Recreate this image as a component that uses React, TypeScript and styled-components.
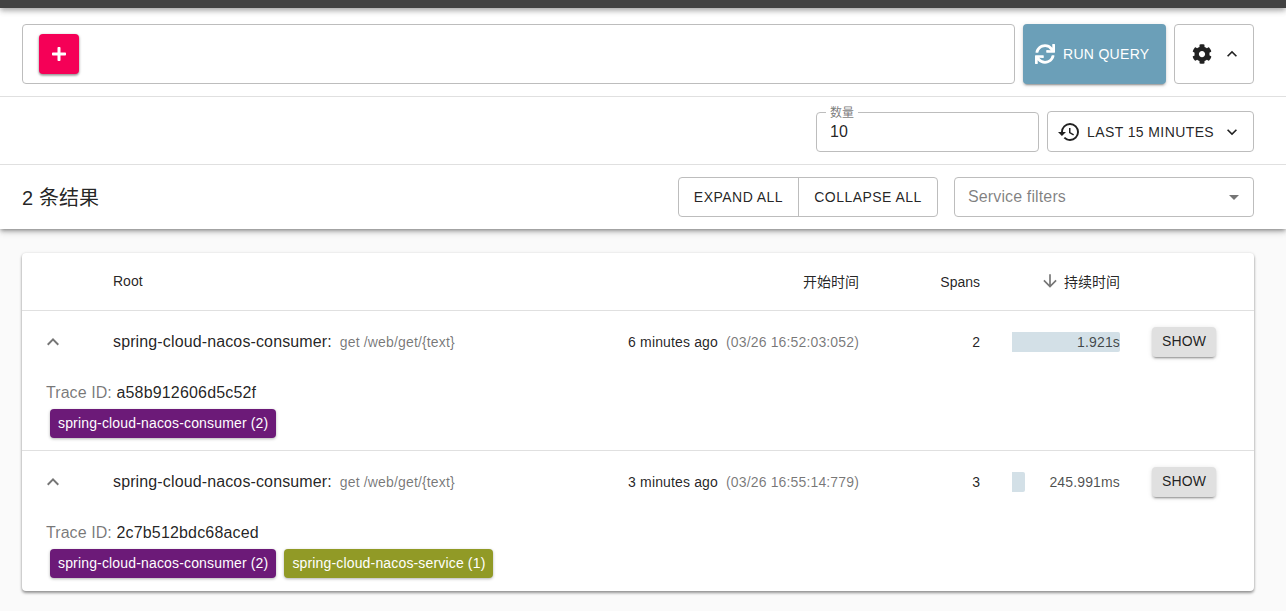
import React from "react";
import styled, { createGlobalStyle } from "styled-components";
import { FaCog, FaPlus, FaSync } from "react-icons/fa";
import { MdArrowDownward, MdArrowDropDown, MdExpandLess, MdExpandMore, MdHistory } from "react-icons/md";

const Global = createGlobalStyle`
  html, body { margin: 0; padding: 0; height: 611px; overflow: hidden; background: #fafafa; }
  body { font-family: "Liberation Sans", Arial, "Noto Sans CJK SC", sans-serif; color: rgba(0,0,0,.87); }
  * { box-sizing: border-box; }
`;

const Page = styled.div`height: 611px; overflow: hidden;`;
const TopBar = styled.div`
  height: 8px; background: #424242;
  box-shadow: 0 2px 4px -1px rgba(0,0,0,.2), 0 4px 5px 0 rgba(0,0,0,.14), 0 1px 10px 0 rgba(0,0,0,.12);
  position: relative; z-index: 2;
`;
const Toolbar = styled.div`
  background: #fff; height: 221px;
  box-shadow: 0 2px 4px -1px rgba(0,0,0,.4), 0 4px 5px 0 rgba(0,0,0,.1), 0 1px 10px 0 rgba(0,0,0,.1);
`;
const Section = styled.div<{ $h: number }>`
  height: ${p => p.$h}px; padding: 0 32px 0 22px; display: flex; align-items: center;
  border-bottom: 1px solid #e0e0e0;
  &:last-child { border-bottom: 0; }
`;
const QuerySection = styled(Section)`padding-top: 4px; gap: 8px;`;
const QueryBox = styled.div`
  flex: 1; height: 60px; border: 1px solid #bdbdbd; border-radius: 4px;
  display: flex; align-items: center; padding-left: 16px;
`;
const AddButton = styled.button`
  width: 40px; height: 40px; border: 0; border-radius: 4px; padding: 0; background: #f50057; color: #fff;
  display: flex; align-items: center; justify-content: center;
  box-shadow: 0 1px 3px 0 rgba(0,0,0,.4), 0 2px 2px 0 rgba(0,0,0,.14);
`;
const RunButton = styled.button`
  width: 143px; height: 60px; border: 0; border-radius: 4px; background: #6b9fb8; color: #fff;
  font: 14px "Liberation Sans", sans-serif; letter-spacing: .3px;
  display: flex; align-items: center; gap: 8px; padding: 0 0 0 12px;
  box-shadow: 0 3px 1px -2px rgba(0,0,0,.2), 0 2px 2px 0 rgba(0,0,0,.14), 0 1px 5px 0 rgba(0,0,0,.12);
`;
const OutlineButton = styled.button`
  height: 60px; width: 80px; border: 1px solid #bdbdbd; border-radius: 4px; background: #fff;
  color: rgba(0,0,0,.87); display: flex; align-items: center; justify-content: center; gap: 10px; padding: 0 0 0 6px;
`;
const FilterSection = styled(Section)`justify-content: flex-end; gap: 8px; padding-top: 2px;`;
const NumberField = styled.div`
  position: relative; width: 223px; height: 40px; margin-top: 1px; border: 1px solid #bdbdbd; border-radius: 4px;
  font-size: 16px; line-height: 37px; padding-left: 13px;
`;
const FieldLabel = styled.span`
  position: absolute; left: 9px; top: -7px; background: #fff; padding: 0 4px;
  font-size: 12px; line-height: 14px; color: rgba(0,0,0,.54);
`;
const RangeButton = styled.button`
  width: 207px; height: 41px; border: 1px solid #bdbdbd; border-radius: 4px; background: #fff;
  color: rgba(0,0,0,.87); font: 14px "Liberation Sans", sans-serif; letter-spacing: .4px;
  display: flex; align-items: center; padding: 0 0 0 9px; gap: 6px;
`;
const RangeChevron = styled.span`display: flex; margin-left: 2px;`;
const ResultCount = styled.div`font-size: 20px; flex: 1; letter-spacing: .1px; margin-bottom: 2px;`;
const ButtonGroup = styled.div`
  display: flex; height: 40px; border: 1px solid #bdbdbd; border-radius: 4px; margin-right: 16px;
`;
const GroupButton = styled.button<{ $w: number }>`
  width: ${p => p.$w}px; border: 0; background: transparent; padding: 0; color: rgba(0,0,0,.87);
  font: 14px "Liberation Sans", sans-serif; letter-spacing: .47px;
  & + & { border-left: 1px solid #bdbdbd; }
`;
const SelectBox = styled.div`
  width: 300px; height: 40px; border: 1px solid #bdbdbd; border-radius: 4px; padding: 0 13px;
  display: flex; align-items: center; justify-content: space-between;
  font-size: 16px; letter-spacing: .13px; color: rgba(0,0,0,.5);
`;
const Content = styled.div`padding: 24px 32px 0 22px;`;
const Card = styled.div`
  background: #fff; border-radius: 4px; height: 338px;
  box-shadow: 0 2px 3px 0 rgba(0,0,0,.4), 0 0 3px 0 rgba(0,0,0,.1);
`;
const HeaderRow = styled.div`
  display: grid; grid-template-columns: 91px 1fr 121px 140px 134px; height: 58px; align-items: center;
  border-bottom: 1px solid #e0e0e0; font-size: 14px; color: rgba(0,0,0,.87); padding-bottom: 2px;
`;
const RootHeader = styled.div`display: flex; align-items: center; justify-content: space-between;`;
const Right = styled.div`text-align: right;`;
const SpansHeader = styled(Right)`padding-top: 2px;`;
const Sorted = styled(Right)`display: flex; justify-content: flex-end; align-items: center; gap: 4px;`;
const TraceBlock = styled.div`
  height: 140px; border-bottom: 1px solid #e0e0e0;
  &:last-child { border-bottom: 0; }
`;
const TraceRow = styled.div`
  display: grid; grid-template-columns: 91px 1fr 121px 140px 134px; height: 62px; align-items: center;
  font-size: 14px;
`;
const Toggle = styled.div`display: flex; justify-content: center; width: 62px; color: rgba(0,0,0,.54);`;
const RootCell = styled.div`display: flex; align-items: baseline; justify-content: space-between; letter-spacing: .15px;`;
const Service = styled.span`font-size: 16px; letter-spacing: .13px;`;
const Muted = styled.span`color: rgba(0,0,0,.54); font-size: 14px; margin-left: 8px; letter-spacing: .15px;`;
const DurationWrap = styled.div`
  position: relative; height: 20px; width: 108px; margin-left: 32px; font-size: 14px; line-height: 20px; text-align: right;
  letter-spacing: .15px;
`;
const DurationFill = styled.div<{ $w: number }>`
  position: absolute; left: 0; top: 0; bottom: 0; width: ${p => p.$w}px; background: #d3e0e7; border-radius: 0 2px 2px 0;
`;
const DurationText = styled.span`position: relative; color: rgba(0,0,0,.7);`;
const ShowButton = styled.button`
  width: 64px; height: 30px; margin-left: 32px; border: 0; border-radius: 4px; background: #e0e0e0; color: rgba(0,0,0,.87);
  font: 14px "Liberation Sans", sans-serif; letter-spacing: .1px; padding: 0 0 2px;
  box-shadow: 0 3px 1px -2px rgba(0,0,0,.2), 0 2px 2px 0 rgba(0,0,0,.14), 0 1px 5px 0 rgba(0,0,0,.12);
`;
const TraceId = styled.div`padding-left: 24px; font-size: 16px; line-height: 20px; margin-top: 10px; letter-spacing: .17px;`;
const TraceLabel = styled.span`color: rgba(0,0,0,.54); letter-spacing: .07px;`;
const Chips = styled.div`display: flex; gap: 8px; padding-left: 28px; margin-top: 6px;`;
const Chip = styled.div<{ $bg: string }>`
  height: 29px; padding: 0 8px; line-height: 28px; border-radius: 4px; background: ${p => p.$bg}; color: #fff;
  font-size: 14px; letter-spacing: .16px;
  box-shadow: 0 1px 3px 0 rgba(0,0,0,.3);
`;

const traces = [
  { id: "a58b912606d5c52f", ago: "6 minutes ago", at: "(03/26 16:52:03:052)", spans: 2, dur: "1.921s", w: 108,
    chips: [["spring-cloud-nacos-consumer (2)", "#6c1a78"]] },
  { id: "2c7b512bdc68aced", ago: "3 minutes ago", at: "(03/26 16:55:14:779)", spans: 3, dur: "245.991ms", w: 13,
    chips: [["spring-cloud-nacos-consumer (2)", "#6c1a78"], ["spring-cloud-nacos-service (1)", "#919a26"]] },
];

export default function App() {
  return (
    <Page>
      <Global />
      <TopBar />
      <Toolbar>
        <QuerySection $h={89}>
          <QueryBox>
            <AddButton aria-label="add"><FaPlus size={16} /></AddButton>
          </QueryBox>
          <RunButton><FaSync size={20} />RUN QUERY</RunButton>
          <OutlineButton aria-label="settings"><FaCog size={20} /><MdExpandLess size={20} /></OutlineButton>
        </QuerySection>
        <FilterSection $h={68}>
          <NumberField><FieldLabel>数量</FieldLabel>10</NumberField>
          <RangeButton><MdHistory size={24} />LAST 15 MINUTES<RangeChevron><MdExpandMore size={20} /></RangeChevron></RangeButton>
        </FilterSection>
        <Section $h={64}>
          <ResultCount>2 条结果</ResultCount>
          <ButtonGroup><GroupButton $w={119}>EXPAND ALL</GroupButton><GroupButton $w={139}>COLLAPSE ALL</GroupButton></ButtonGroup>
          <SelectBox>Service filters<MdArrowDropDown size={24} color="rgba(0,0,0,.54)" style={{ marginRight: -6 }} /></SelectBox>
        </Section>
      </Toolbar>
      <Content>
        <Card>
          <HeaderRow>
            <div />
            <RootHeader><span>Root</span><span>开始时间</span></RootHeader>
            <SpansHeader>Spans</SpansHeader>
            <Sorted><MdArrowDownward size={20} color="rgba(0,0,0,.54)" />持续时间</Sorted>
            <div />
          </HeaderRow>
          {traces.map(t => (
            <TraceBlock key={t.id}>
              <TraceRow>
                <Toggle><MdExpandLess size={24} /></Toggle>
                <RootCell>
                  <div><Service>spring-cloud-nacos-consumer:</Service><Muted>get /web/get/{"{text}"}</Muted></div>
                  <div>{t.ago}<Muted>{t.at}</Muted></div>
                </RootCell>
                <Right>{t.spans}</Right>
                <DurationWrap><DurationFill $w={t.w} /><DurationText>{t.dur}</DurationText></DurationWrap>
                <div><ShowButton>SHOW</ShowButton></div>
              </TraceRow>
              <TraceId><TraceLabel>Trace ID:</TraceLabel> {t.id}</TraceId>
              <Chips>{t.chips.map(([n, c]) => <Chip key={n} $bg={c}>{n}</Chip>)}</Chips>
            </TraceBlock>
          ))}
        </Card>
      </Content>
    </Page>
  );
}
